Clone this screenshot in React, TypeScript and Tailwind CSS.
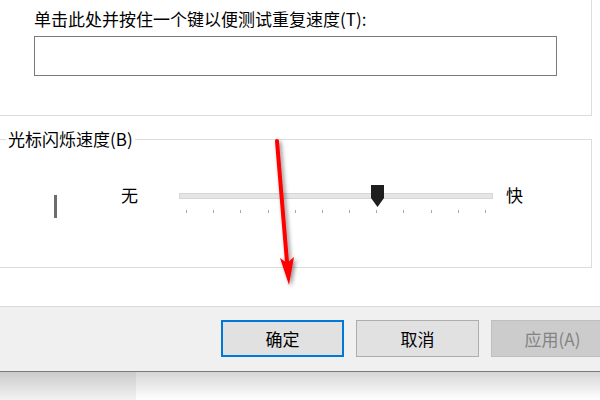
import React from "react";

const font = { fontFamily: '"Noto Sans CJK SC", "Noto Sans", sans-serif' };

export default function App() {
  const ticks = Array.from({ length: 12 });
  return (
    <div
      className="relative w-[600px] h-[400px] overflow-hidden bg-white text-black"
      style={font}
    >
      <div className="flex flex-col h-[372px] border-b border-[#7a7a7a]">
        {/* content area */}
        <div className="h-[306px] bg-white flex flex-col">
          {/* group box 1 */}
          <div className="ml-[-10px] mt-[-10px] w-[602px] h-[126px] border border-[#dcdcdc] pl-[43px] pt-[17px]">
            <div className="text-[17px] leading-[22px] whitespace-nowrap">单击此处并按住一个键以便测试重复速度(T):</div>
            <div className="mt-[6px] w-[523px] h-[40px] border border-[#7a7a7a] bg-white" />
          </div>
          {/* group box 2 */}
          <div className="relative ml-[-10px] mt-[23px] w-[602px] h-[129px] border border-[#dcdcdc]">
            <div className="absolute left-[15px] top-[-12px] bg-white px-[2px] text-[17px] leading-[22px] whitespace-nowrap">
              光标闪烁速度(B)
            </div>
            <div className="flex items-start pt-[45px] pl-[63px]">
              <div className="mt-[10px] w-[3px] h-[23px] bg-[#6d6d6d]" />
              <div className="ml-[64px] mt-[-1px] text-[17px] leading-[22px]">无</div>
              <div className="relative ml-[41px] w-[314px] h-[30px]">
                <div className="absolute left-0 right-0 top-[8px] h-[6px] bg-[#e6e6e6] border border-[#d6d6d6]" />
                <div className="absolute left-[7px] right-[7px] top-[25px] flex justify-between">
                  {ticks.map((_, i) => (
                    <div key={i} className="w-px h-[3px] bg-[#a8a8a8]" />
                  ))}
                </div>
                <svg className="absolute left-[192px] top-0" width="13" height="22" viewBox="0 0 13 22">
                  <polygon points="0,0 13,0 13,13 6.5,22 0,13" fill="#1e1e1e" />
                </svg>
              </div>
              <div className="ml-[13px] mt-[-1px] text-[17px] leading-[22px]">快</div>
            </div>
          </div>
        </div>
        {/* bottom bar */}
        <div className="flex-1 bg-[#f0f0f0] border-t border-[#dadada] flex items-start pt-[13px] pl-[221px] gap-[12px] text-[17px]">
          <div className="shrink-0 w-[123px] h-[37px] border-2 border-[#0078d7] bg-[#e1e1e1] flex items-center justify-center">
            确定
          </div>
          <div className="shrink-0 w-[123px] h-[37px] border border-[#adadad] bg-[#e1e1e1] flex items-center justify-center">
            取消
          </div>
          <div className="shrink-0 w-[123px] h-[37px] border border-[#bfbfbf] bg-[#cccccc] text-[#838383] flex items-center justify-center">
            应用(A)
          </div>
        </div>
      </div>
      {/* below window */}
      <div className="relative flex h-[28px]">
        <div className="w-[136px] bg-[#f2f2f2]" />
        <div className="flex-1 bg-white" />
        <div className="absolute inset-0 bg-gradient-to-b from-[rgba(0,0,0,0.16)] to-transparent" />
      </div>
      {/* red arrow */}
      <svg className="absolute left-0 top-0 pointer-events-none" width="600" height="400">
        <defs>
          <filter id="sh" x="-50%" y="-50%" width="200%" height="200%">
            <feDropShadow dx="2" dy="2" stdDeviation="2" floodColor="#000" floodOpacity="0.45" />
          </filter>
        </defs>
        <g filter="url(#sh)">
          <line x1="277" y1="141" x2="287" y2="262" stroke="#ff0000" strokeWidth="4" strokeLinecap="round" />
          <polygon points="280,258 287,263 294,257 289,285" fill="#ff0000" />
        </g>
      </svg>
    </div>
  );
}
